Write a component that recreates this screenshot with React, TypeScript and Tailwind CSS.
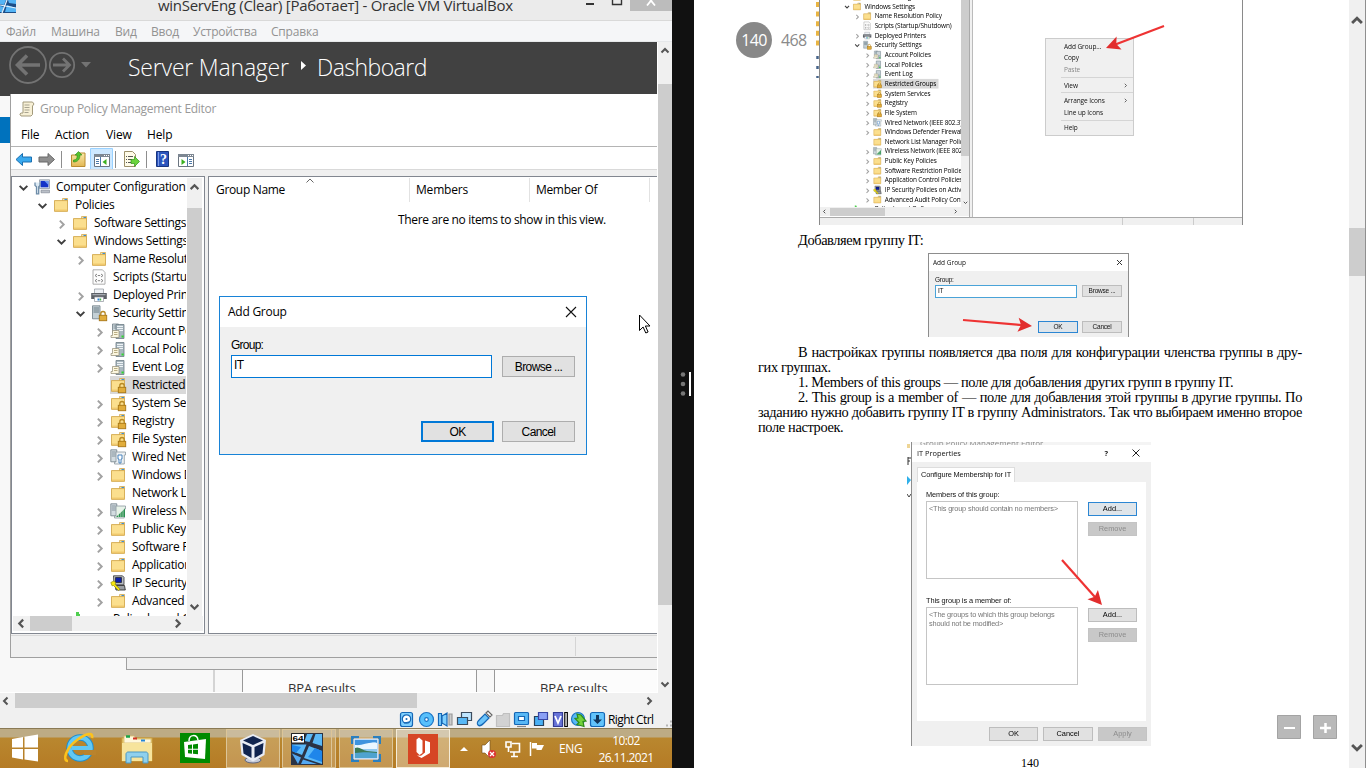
import type { ReactNode } from "react";

const UI = "font-['Open_Sans','Noto_Sans',sans-serif]";
const SANS = "font-['Liberation_Sans',sans-serif]";

/* ---------- small glyphs ---------- */

function Chev({ dir, className = "", color = "#555", w = 2 }: { dir: "up" | "down" | "left" | "right"; className?: string; color?: string; w?: number }) {
  const d = {
    up: "M1.5 6.5 5 3l3.5 3.5",
    down: "M1.5 3.5 5 7l3.5-3.5",
    left: "M6.5 1.5 3 5l3.5 3.5",
    right: "M3.5 1.5 7 5 3.5 8.5",
  }[dir];
  return (
    <svg viewBox="0 0 10 10" className={"shrink-0 " + className}>
      <path d={d} fill="none" stroke={color} strokeWidth={w} />
    </svg>
  );
}

function Arrow({ x1, y1, x2, y2, className }: { x1: number; y1: number; x2: number; y2: number; className: string }) {
  const len = Math.hypot(x2 - x1, y2 - y1);
  const ux = (x2 - x1) / len;
  const uy = (y2 - y1) / len;
  const bx = x2 - ux * 14;
  const by = y2 - uy * 14;
  const pts = [
    [x2, y2],
    [bx - uy * 7, by + ux * 7],
    [bx + ux * 3, by + uy * 3],
    [bx + uy * 7, by - ux * 7],
  ];
  return (
    <svg className={"absolute overflow-visible " + className} width="80" height="60">
      <path d={`M${x1} ${y1}L${bx + ux * 4} ${by + uy * 4}`} stroke="#e33" strokeWidth="2.2" />
      <polygon points={pts.map((p) => p.join(",")).join(" ")} fill="#e22d2d" />
    </svg>
  );
}

/* ---------- tree icons ---------- */

const folderShape = (
  <>
    <path d="M1.5 3.5h8l1-2h4v13h-13z" fill="#e3b95c" />
    <path d="M9.500 1.500h5v2.500h-5z" fill="#f6e3a8" stroke="#c99a3c" strokeWidth=".6" />
    <path d="M11.500 2.500h2.500" stroke="#3b8fd8" strokeWidth="1" />
    <path d="M1.500 3.600h13v10.700h-13z" fill="#fbdf8e" stroke="#cfa44a" strokeWidth=".8" />
    <path d="M2 13.2h12.2" stroke="#efc568" strokeWidth="1.2" />
  </>
);
const lockShape = (
  <>
    <path d="M9.8 10.5V8.7a2.2 2.2 0 0 1 4.4 0v1.8" fill="none" stroke="#b98a25" strokeWidth="1.3" />
    <rect x="8.2" y="10.2" width="7.6" height="5.6" fill="#d79b22" stroke="#9c6d12" strokeWidth=".7" />
    <path d="M9 12h6M9 14h6" stroke="#f3cf6c" strokeWidth=".7" />
  </>
);
const serverShape = (
  <>
    <path d="M6 1.5h8v14H6z" fill="#a9b7bf" stroke="#6d7c85" strokeWidth=".8" />
    <path d="M7 3.5h6M7 5.5h6M7 7.5h6" stroke="#eef3f6" />
    <path d="M11.5 13.5h2.2" stroke="#31d631" strokeWidth="2" />
    <path d="M2.5 7.5h6.5v7H1v-2h1.5z" fill="#fbf6df" stroke="#8f8a74" strokeWidth=".7" />
    <path d="M4 9.5h3.5M4 11.5h3.5" stroke="#a89b6b" strokeWidth=".8" />
  </>
);

type IconName = "pc" | "folder" | "script" | "printer" | "secserver" | "acct" | "server" | "lock" | "wired" | "wifi" | "ip" | "green";

function TreeIcon({ name }: { name: IconName }) {
  let body: ReactNode = folderShape;
  if (name === "lock") body = <>{folderShape}{lockShape}</>;
  if (name === "server") body = serverShape;
  if (name === "acct")
    body = (
      <>
        <path d="M2.5 1h6v9h-6z" fill="#cfd9de" stroke="#6d7c85" strokeWidth=".8" />
        <path d="M3.5 3h4M3.5 5h4" stroke="#71818a" strokeWidth=".8" />
        {serverShape}
      </>
    );
  if (name === "secserver")
    body = (
      <>
        <path d="M1.5.8h7.5v13H1.5z" fill="#c4d0d6" stroke="#6d7c85" strokeWidth=".8" />
        <path d="M2.5 3h5.5M2.5 5h5.5M2.5 7h5.5" stroke="#5f717b" strokeWidth=".9" />
        {lockShape}
      </>
    );
  if (name === "pc")
    body = (
      <>
        <path d="M5.500.800h10v8.800h-10z" fill="#dfe6ee" stroke="#8a93a0" strokeWidth=".8" />
        <path d="M6.600 1.900h7.800v6.400H6.600z" fill="#1533c8" />
        <path d="M10.500 1.900h3.900v4z" fill="#6f9cf2" />
        <path d="M7 11.200h8.500v2.600H7z" fill="#b9bfc7" stroke="#7b838d" strokeWidth=".6" />
        <path d="M1 3.500v3l1.500 1.300v7h2.200v-7L6 6.500v-3" fill="#dce9f3" stroke="#6d8ca8" strokeWidth="1.300" />
      </>
    );
  if (name === "script")
    body = (
      <>
        <path d="M2 .8h9.500L14 3.500v11.700H2z" fill="#fdfdfd" stroke="#9a9a9a" strokeWidth=".8" />
        <path d="M6 5 4 6.500 6 8M10 5l2 1.500L10 8M6.800 6.500h2.400M6 10.200 4 11.700l2 1.500M10 10.200l2 1.500-2 1.500M6.800 11.700h2.400" fill="none" stroke="#777" strokeWidth=".9" />
      </>
    );
  if (name === "printer")
    body = (
      <>
        <path d="M3.500 2h9v5h-9z" fill="#eef1f5" stroke="#8d949c" strokeWidth=".7" />
        <path d="M.2 6h15.600v6H.2z" fill="#5c6066" />
        <path d="M1.500 7h13v1.300h-13z" fill="#a4a9b0" />
        <path d="M3.500 10h9v4.500h-9z" fill="#fff" stroke="#8d949c" strokeWidth=".7" />
        <path d="M6.500 11.500h2v2h-2z" fill="#2d7fd6" />
        <path d="M8.700 11.500h1.500v2H8.700z" fill="#48b04a" />
      </>
    );
  if (name === "wired" || name === "wifi")
    body = (
      <>
        <path d="M.8.800h6v12h-6z" fill="#d3dce1" stroke="#6d7c85" strokeWidth=".8" />
        <path d="M1.800 3h4M1.800 5h4M1.800 7h4" stroke="#71818a" strokeWidth=".8" />
        <path d="M6 3h9.500v3h-1.200v9H4.500v-2H6z" fill={name === "wired" ? "#edf1f3" : "#e7f2e8"} stroke="#8b979e" strokeWidth=".8" />
        {name === "wired" ? (
          <path d="M8 6h4v4h-1v4H9v-4H8z" fill="#fff" stroke="#3878b8" strokeWidth=".9" />
        ) : (
          <path d="M6 14h9V5.500z" fill="#2c8f50" />
        )}
        {name === "wifi" && <path d="M8.500 8v6M10.800 7v7M13 5v9" stroke="#dff2e3" strokeWidth=".6" />}
      </>
    );
  if (name === "ip")
    body = (
      <>
        <path d="M3.500.800h9l1.500 1.500v7.500h-10z" fill="#b9bdc2" stroke="#333" strokeWidth=".8" />
        <path d="M5.500 2.500h6v5h-6z" fill="#0b1ea8" stroke="#111" strokeWidth=".6" />
        <path d="M5 10.500h9.500l.8 4.500H6z" fill="#9a9ea3" stroke="#222" strokeWidth=".8" />
        <path d="M.8 7.500l3-1.500 2 2-.8 1.200 5 5-1.500 1.300-5-5-1.500.300z" fill="#f6e710" stroke="#8a7d00" strokeWidth=".6" />
      </>
    );
  if (name === "green") body = <path d="M-15 1h3v2h1v12h-4z" fill="#4fcf4f" />;
  return (
    <svg viewBox="0 0 16 16" className="h-4 w-4 shrink-0 overflow-visible">
      {body}
    </svg>
  );
}

type Row = { t: string; l: 0 | 1 | 2 | 3 | 4; i: IconName; c?: "open" | "closed"; sel?: boolean };
const PAD = { 0: "pl-[5px]", 1: "pl-[24px]", 2: "pl-[43px]", 3: "pl-[62px]", 4: "pl-[81px]" };

function TreeRow({ row, wide }: { row: Row; wide?: boolean }) {
  return (
    <div className={"flex h-[18px] shrink-0 items-center " + PAD[row.l]}>
      <span className="flex w-[16px] shrink-0">
        {row.c && <Chev dir={row.c === "open" ? "down" : "right"} className={row.c === "open" ? "h-[11px] w-[11px]" : "mt-0.5 h-[11px] w-[11px]"} color={row.c === "open" ? "#404040" : "#a2a2a2"} w={1.8} />}
      </span>
      <span className={"flex h-[18px] items-center gap-[6px] " + (row.sel ? "bg-[#d9d9d9] " + (wide ? "pr-1" : "pr-10") : "")}>
        <TreeIcon name={row.i} />
        <span className={"whitespace-nowrap leading-[18px] " + (wide ? "text-[12px] font-medium tracking-[-0.28px]" : "text-[12px] tracking-[-0.3px]")}>{row.t}</span>
      </span>
    </div>
  );
}

const rows: Row[] = [
  { t: "Computer Configuration", l: 0, i: "pc", c: "open" },
  { t: "Policies", l: 1, i: "folder", c: "open" },
  { t: "Software Settings", l: 2, i: "folder", c: "closed" },
  { t: "Windows Settings", l: 2, i: "folder", c: "open" },
  { t: "Name Resolution Policy", l: 3, i: "folder", c: "closed" },
  { t: "Scripts (Startup/Shutdown)", l: 3, i: "script" },
  { t: "Deployed Printers", l: 3, i: "printer", c: "closed" },
  { t: "Security Settings", l: 3, i: "secserver", c: "open" },
  { t: "Account Policies", l: 4, i: "acct", c: "closed" },
  { t: "Local Policies", l: 4, i: "server", c: "closed" },
  { t: "Event Log", l: 4, i: "server", c: "closed" },
  { t: "Restricted Groups", l: 4, i: "lock", sel: true },
  { t: "System Services", l: 4, i: "lock", c: "closed" },
  { t: "Registry", l: 4, i: "lock", c: "closed" },
  { t: "File System", l: 4, i: "lock", c: "closed" },
  { t: "Wired Network (IEEE 802.3)", l: 4, i: "wired", c: "closed" },
  { t: "Windows Defender Firewall", l: 4, i: "folder", c: "closed" },
  { t: "Network List Manager Policies", l: 4, i: "folder" },
  { t: "Wireless Network (IEEE 802.11)", l: 4, i: "wifi", c: "closed" },
  { t: "Public Key Policies", l: 4, i: "folder", c: "closed" },
  { t: "Software Restriction Policies", l: 4, i: "folder", c: "closed" },
  { t: "Application Control Policies", l: 4, i: "folder", c: "closed" },
  { t: "IP Security Policies on Active", l: 4, i: "ip", c: "closed" },
  { t: "Advanced Audit Policy Configuration", l: 4, i: "folder", c: "closed" },
  { t: "Policy-based QoS", l: 3, i: "green" },
];

/* ---------- left: virtual machine window ---------- */

function HostChrome() {
  return (
    <>
      <div className="relative flex h-[21px] shrink-0 border-b border-[#d9d9d9] bg-[#ebebeb]">
        <svg width="16" height="13" className="shrink-0">
          <path d="M0 0h16v13H0z" fill="#1d4d86" />
          <path d="M0 0h6L4 5 0 4zM8 0h8v4L9 3zM0 6l4 1-2 5H0zM7 5l9 3v4H5z" fill="#54b4f5" />
          <path d="M7 0 2 13M0 5l16 3" stroke="#e6f4ff" strokeWidth="1.2" />
        </svg>
        <div className="-mt-[5px] ml-[142px] whitespace-nowrap text-[15px] leading-[21px] tracking-[-0.29px] text-[#333]">winServEng (Clear) [Работает] - Oracle VM VirtualBox</div>
        <div className="ml-auto flex h-[11px]">
          <svg width="44" height="11">
            <path d="M0 4h8" stroke="#333" strokeWidth="2" />
            <path d="M26.500-3v7.500h9V-3" fill="none" stroke="#333" strokeWidth="1.4" />
          </svg>
          <div className="flex w-[42px] justify-center bg-[#bcbcbc]">
            <svg width="10" height="6"><path d="M1 5.500 8-3M9 5.500 2-3" stroke="#fff" strokeWidth="1.800" /></svg>
          </div>
        </div>
      </div>
      <div className="flex h-[21px] shrink-0 border-b border-[#e6e8ea] bg-[#f5f6f8] pl-[6px] text-[12px] leading-[22px] tracking-[-0.2px] text-[#929292]">
        <span className="w-[45px]">Файл</span>
        <span className="w-[64px]">Машина</span>
        <span className="w-[36px]">Вид</span>
        <span className="w-[42px]">Ввод</span>
        <span className="w-[78px]">Устройства</span>
        <span>Справка</span>
      </div>
    </>
  );
}

function ServerManager() {
  return (
    <div className="flex h-full flex-col bg-[#f8f8f8]">
      <div className="flex h-[54px] shrink-0 items-start bg-[#414141] pb-0.5">
        <svg width="128" height="52" fill="none" stroke="#737373">
          <circle cx="28" cy="23" r="18" strokeWidth="1.800" />
          <path d="M40 23H18M27 13.500 17.500 23l9.500 9.500" strokeWidth="3.600" />
          <circle cx="62" cy="23" r="12.200" strokeWidth="1.800" />
          <path d="M53 23h15M63 16.500l6.500 6.500-6.500 6.500" strokeWidth="2.800" />
          <path d="M81 20h10l-5 5.500z" fill="#737373" stroke="none" />
        </svg>
        <div className="flex h-[50px] items-center whitespace-nowrap text-[23px] font-light text-white">
          <span className="w-[171px] tracking-[-0.2px]">Server Manager</span>
          <svg width="18" height="12"><path d="M2 0v9l5-4.500z" fill="#fff" /></svg>
          <span className="tracking-[-0.55px]">Dashboard</span>
        </div>
      </div>
      <div className="mt-[21px] h-[26px] w-[11px] bg-[#0072bd]" />
      <div className="mt-auto flex h-[23px] items-stretch overflow-hidden">
        <div className="w-[215px] border-r-2 border-[#d4d4d4]" />
        <div className="ml-[27px] w-[235px] border-x border-[#999] bg-[#fcfcfc] pl-[45px] pt-[10px] text-[13px] leading-[19px] tracking-[-0.1px] text-[#333]">BPA results</div>
        <div className="ml-[17px] flex-1 border-l border-[#999] bg-[#fcfcfc] pl-[45px] pt-[10px] text-[13px] leading-[19px] tracking-[-0.1px] text-[#333]">BPA results</div>
      </div>
    </div>
  );
}

function Toolbar() {
  return (
    <svg width="200" height="22" className="block">
      <defs>
        <linearGradient id="fy" x1="0" y1="0" x2="0" y2="1"><stop offset="0" stopColor="#fbe9a9" /><stop offset="1" stopColor="#e2b753" /></linearGradient>
      </defs>
      <path d="M5 12.500l6.500-6v3.500h9v5h-9v3.500z" fill="#39a9ee" stroke="#1b6fb0" />
      <path d="M43.500 12.500l-6.500-6v3.500h-9v5h9v3.500z" fill="#8f8f8f" stroke="#686868" />
      <path d="M50.500 4v17M104.500 4v17M135.500 4v17" stroke="#8e8e8e" />
      <path d="M60.500 8h6l1.500-2h6v13.500h-13.500z" fill="url(#fy)" stroke="#b98c31" />
      <path d="M62.500 13c4 0 3.500-3 3.500-5h-2l3.500-3.500 3.500 3.500H69c0 4-2 7-6.500 7z" fill="#55c22f" stroke="#2b8a16" strokeWidth=".6" />
      <path d="M79.500 1.500h22v21h-22z" fill="#cde8ff" stroke="#99d1ff" />
      <g>
        <path d="M83.500 7.500h15v12h-15z" fill="#fff" stroke="#6b7580" />
        <path d="M83 7h16v3H83z" fill="#7d8792" /><path d="M93 8.500h5" stroke="#fff" strokeDasharray="1 1" />
        <path d="M89.500 10v9M85 12.500h3M85 14.500h3M85 16.500h3" stroke="#4c78a8" />
        <path d="M95.500 12v6L91.500 15z" fill="#3bb01f" />
      </g>
      <path d="M113.500 4.500h8l3 3v12h-11z" fill="#fffbe8" stroke="#9b8f69" />
      <path d="M115 9.500h1M117 9.500h5M115 12.500h1M117 12.500h4M115 15.500h1M117 15.500h4" stroke="#555" />
      <path d="M120 12.500h3.500v-3l5 5-5 5v-3H120z" fill="#6bd33d" stroke="#31941a" strokeWidth=".7" />
      <path d="M145.500 4.500h12v15h-12z" fill="#2c55bd" stroke="#18357f" /><path d="M147.500 5v14" stroke="#7c9be6" />
      <text x="149" y="17" fontSize="14" fontWeight="700" fill="#fff" fontFamily="Liberation Serif, serif">?</text>
      <path d="M167.500 7.500h15v12h-15z" fill="#fff" stroke="#6b7580" />
      <path d="M167 7h16v3h-16z" fill="#7d8792" /><path d="M177 8.500h5" stroke="#fff" strokeDasharray="1 1" />
      <path d="M176.500 10v9M178 12.500h3M178 14.500h3M178 16.500h3" stroke="#4c78a8" />
      <path d="M170.500 12v6l4-3z" fill="#3bb01f" />
    </svg>
  );
}

function TreePane() {
  return (
    <div className="flex w-[194px] shrink-0 flex-col border border-[#828790] bg-white p-px">
      <div className="flex h-[438px] pr-px">
        <div className="flex w-[173px] shrink-0 flex-col overflow-hidden">
          {rows.map((r, n) => (
            <TreeRow key={n} row={r} />
          ))}
        </div>
        <div className="ml-px flex flex-1 flex-col items-center bg-[#f0f0f0]">
          <Chev dir="up" className="mt-1 h-[11px] w-[11px]" />
          <div className="mt-[15px] h-[312px] w-full bg-[#cdcdcd]" />
          <Chev dir="down" className="mb-1 mt-auto h-[11px] w-[11px]" />
        </div>
      </div>
      <div className="flex h-[15px] items-center bg-[#f0f0f0] pl-[3px]">
        <Chev dir="left" className="h-[11px] w-[11px]" />
        <div className="ml-[3px] h-[15px] w-[42px] bg-[#cdcdcd]" />
        <Chev dir="right" className="ml-[100px] h-[11px] w-[11px]" />
      </div>
    </div>
  );
}

function ListPane() {
  return (
    <div className="flex flex-1 flex-col border-y border-l border-[#828790] bg-white text-[12px]">
      <div className="mt-px flex h-[24px] text-[12px] leading-[24px] tracking-[-0.33px]">
        <div className="relative w-[201px] border-r border-[#e2e2e2] pl-[7px]">
          Group Name
          <Chev dir="up" className="absolute left-[96px] top-[-2px] h-[10px] w-[10px]" color="#666" w={1} />
        </div>
        <div className="w-[120px] border-r border-[#e2e2e2] pl-[6px] tracking-[-0.2px]">Members</div>
        <div className="w-[120px] border-r border-[#e2e2e2] pl-[6px]">Member Of</div>
      </div>
      <div className="mt-[9px] pl-[189px] leading-[18px] tracking-[-0.33px]">There are no items to show in this view.</div>
    </div>
  );
}

function PolicyEditor() {
  return (
    <div className="absolute left-[10px] top-[52px] flex h-[564px] w-[647px] flex-col border-b border-l border-[#a0a0a0] bg-[#f0f0f0]">
      <div className="flex h-[27px] shrink-0 items-center gap-[5px] bg-white pl-[8px] pt-[3px]">
        <svg width="16" height="16">
          <path d="M4 1h9.500l1.500 2-1.500 2v8.500L12 15H2L.8 13 2 12h2z" fill="#f7f0d6" stroke="#a39a7c" />
          <path d="M5.500 4h5M5.500 6.500h5M5.500 9h5M5.500 11.500h4" stroke="#a8a391" />
        </svg>
        <span className="text-[12px] tracking-[-0.29px] text-[#999]">Group Policy Management Editor</span>
      </div>
      <div className="flex h-[26px] shrink-0 border-b border-[#b4b4b4] bg-white pl-[10px] text-[12px] leading-[28px] tracking-[-0.15px]">
        <span className="w-[34px]">File</span>
        <span className="w-[51px]">Action</span>
        <span className="w-[41px]">View</span>
        <span>Help</span>
      </div>
      <div className="h-[23px] shrink-0 border-b border-[#d9d9d9] bg-white"><Toolbar /></div>
      <div className="mt-[6px] flex h-[458px] shrink-0 gap-[3px]">
        <TreePane />
        <ListPane />
      </div>
      <div className="mt-px flex flex-1 border-t border-[#d9d9d9] py-px"><div className="w-[565px] border-r border-[#d5d5d5]" /></div>
    </div>
  );
}

function DialogButton({ children, primary }: { children: ReactNode; primary?: boolean }) {
  return (
    <div className={"flex h-[21px] w-[73px] items-center justify-center bg-[#e1e1e1] text-[12px] tracking-[-0.6px] " + (primary ? "border-2 border-[#0078d7]" : "border border-[#adadad]")}>{children}</div>
  );
}

function AddGroupDialog() {
  return (
    <div className="absolute left-[219px] top-[254px] h-[159px] w-[368px] border border-[#1883d7] bg-[#f0f0f0]">
      <div className="flex h-[30px] items-center justify-between bg-white pl-[8px] pr-[9px]">
        <span className="text-[12px] tracking-[-0.25px]">Add Group</span>
        <svg width="12" height="12"><path d="M1 1l10 10M11 1 1 11" stroke="#111" strokeWidth="1.100" /></svg>
      </div>
      <div className={"pl-[11px] pr-[11px] pt-[10px] " + SANS}>
        <div className="text-[12px] leading-[16px] tracking-[-0.75px]">Group:</div>
        <div className="mt-[2px] flex justify-between">
          <div className="h-[23px] w-[261px] border border-[#0078d7] bg-white pl-[2px] text-[12px] leading-[19px] tracking-[-0.5px]">IT</div>
          <div className="pt-px"><DialogButton>Browse ...</DialogButton></div>
        </div>
        <div className="mt-[43px] flex justify-end gap-[8px]">
          <DialogButton primary>OK</DialogButton>
          <DialogButton>Cancel</DialogButton>
        </div>
      </div>
    </div>
  );
}

function StatusIcons() {
  return (
    <svg width="672" height="20" className="block">
      <g strokeWidth="1.200">
        <rect x="400.500" y="4.500" width="12" height="14" rx="2" fill="#7fd0ff" stroke="#1567b5" />
        <circle cx="406.500" cy="11" r="4.200" fill="#fff" stroke="#1567b5" /><circle cx="406.500" cy="11" r="1" fill="#1567b5" /><path d="M404 15l5-1" stroke="#1567b5" />
        <circle cx="426.500" cy="11.500" r="7" fill="#58c0fb" stroke="#1b74c5" /><circle cx="426.500" cy="11.500" r="1.800" fill="#fff" stroke="#1b74c5" />
        <path d="M438.500 5.500h3v12h-3zM442 8l5-3v13l-5-3z" fill="#7fd0ff" stroke="#1567b5" /><path d="M449 6h3v11h-3z" fill="#ccc" stroke="#999" />
        <path d="M461.500 4.500h10v8h-10z" fill="#bfe6ff" stroke="#3b4c5e" /><path d="M457.500 9.500h10v7h-10z" fill="#58b8f5" stroke="#3b4c5e" />
        <path d="M478 17c-2-2 0-4 2-6l5-5 4 4-5 5c-2 2-4 4-6 2z" fill="#6cc4fa" stroke="#1567b5" /><path d="M486 5l2-2 4 4-2 2z" fill="#fff" stroke="#666" />
        <path d="M496.500 7.500h6l1-2h6v13h-13z" fill="#d2d2d2" stroke="#c0c0c0" />
        <rect x="514.500" y="4.500" width="14" height="12" rx="1" fill="#58b8f5" stroke="#1567b5" /><path d="M518.500 8.500h6v4h-6z" fill="#fff" stroke="#1567b5" /><path d="M517 18.500h9" stroke="#888" />
        <path d="M534.500 8.500h9v9h-9z" fill="#49b0f4" stroke="#26415c" /><path d="M538.500 4.500h9v7h-9z" fill="#8aa0f5" stroke="#3946a5" />
        <path d="M553.500 4.500h9v14h-9z" fill="#6874d8" stroke="#333c97" /><path d="M555 8l3 7 3-7" fill="none" stroke="#fff" strokeWidth="1.800" />
        <path d="M564.800 4.500h2.500v14h-2.500z" fill="#fff" stroke="#000" />
        <circle cx="578" cy="11" r="6.500" fill="#58b8f5" stroke="#1b74c5" /><path d="M577 6l4 1 5 6-3 .500 1 5-7-2 2-2-4-4 3-.500z" fill="#72d13b" stroke="#2c8a1a" />
        <rect x="590.500" y="4.500" width="14" height="14" rx="2" fill="#62c3fb" stroke="#1567b5" />
        <path d="M597.500 7v5" stroke="#12365c" strokeWidth="3" /><path d="M593 11.500h9l-4.500 4.500z" fill="#12365c" />
      </g>
      <path d="M670 13.500h2M666 17.500h2M670 17.500h2" stroke="#b5b5b5" strokeWidth="2" />
      <text x="608" y="16" fontSize="12" letterSpacing="-0.6" fill="#000" fontFamily="Open Sans, sans-serif">Right Ctrl</text>
    </svg>
  );
}

function TaskButton({ children, active, className }: { children: ReactNode; active?: boolean; className: string }) {
  return (
    <div className={"flex h-[39px] items-center justify-center border " + className + (active ? " border-[#f5ecd9] bg-white/35" : " border-[#dcc598] bg-white/20")}>{children}</div>
  );
}

function Taskbar() {
  return (
    <div className="relative flex h-[40px] shrink-0 bg-[linear-gradient(180deg,#bdab84_0,#bdab84_9px,#b9872f_10px,#b57b25_100%)] pt-px shadow-[inset_0_1px_0_#8a7a55]">
      <svg width="226" height="39" className="shrink-0">
        <path d="M12 10l11-2v10.500H12zM24.500 7.700 38 5.500v13H24.500zM12 20h11v10.500l-11-2zM24.500 20H38v12.500l-13.500-2z" fill="#fff" />
        <g transform="translate(0 -1)">
          <circle cx="80" cy="20" r="10.500" fill="none" stroke="#1f8fd0" strokeWidth="6.500" />
          <circle cx="80" cy="20" r="10.500" fill="none" stroke="#62c8f4" strokeWidth="4.500" />
          <path d="M72 20h20" stroke="#62c8f4" strokeWidth="4" /><path d="M84 24.500h12" stroke="#b9832d" strokeWidth="5" />
          <path d="M68 33c-6 0-2-13 9-21 9-7 17-8 15-2" fill="none" stroke="#fcc21c" strokeWidth="2.600" />
        </g>
        <path d="M122 9h30v23h-30z" fill="#eed37c" stroke="#c9a142" /><path d="M124 7h10l2 3h15v4h-27z" fill="#fff8dc" stroke="#d8bd6e" strokeWidth=".8" />
        <path d="M126 7.500h4" stroke="#18a348" strokeWidth="2.500" /><path d="M133 9.500h4" stroke="#cf3327" strokeWidth="2" /><path d="M141 11.500h4" stroke="#2586d7" strokeWidth="2" />
        <path d="M122 14h30v18h-30z" fill="#f7e49c" />
        <path d="M126 34V25c0-1 1-2 2-2h18c1 0 2 1 2 2v9h-5v-6h-12v6z" fill="#8fd0ee" stroke="#4b98c3" />
        <path d="M180 4h30v30h-30z" fill="#008a00" />
        <path d="M184 13l22-3-1 20-20-2z" fill="#fff" /><path d="M189 12c0-7 8-7 9-1" fill="none" stroke="#fff" strokeWidth="1.500" />
        <path d="M188 16l4-.5v4.300h-4zM193 15.400l5-.6v5h-5zM188 20.800h4v3.900l-4-.5zM193 20.800h5v4.500l-5-.6z" fill="#008a00" />
      </svg>
      <TaskButton className="w-[54px]">
        <svg width="30" height="32">
          <ellipse cx="15" cy="27" rx="8" ry="3" fill="#c6cbd8" stroke="#5e6680" />
          <path d="M15 1 28 7l-1.500 15L15 28.500 3.500 22 2 7z" fill="#e8ecf5" />
          <path d="M15 3l10 4.500L15 12 5 7.500zM4.500 10 13.500 14v11L5.500 20.500zM25.500 10l-9 4v11l8-4.500z" fill="#10244f" />
        </svg>
      </TaskButton>
      <TaskButton className="ml-[2px] w-[50px] !justify-start pl-[8px]">
        <svg width="32" height="32">
          <path d="M0 0h32v32H0z" fill="#2b3344" />
          <path d="M16 1h6l-3.500 8-5-1zM24.500 1H31v12l-9.500-3zM1 11.500h14.500L11 22 1 18zM18 13l13 5v13l-18-6z" fill="#5bb9f7" /><path d="M1 12l9 2-5 6-4-2zM24 15l7 3v11l-14-5z" fill="#1f86ea" /><path d="M1 20.500l9 4-3 6.500zM12 26.500l14 4.500H10z" fill="#54a9f2" />
          <path d="M.5.500h13v9.500H.5z" fill="#fff" stroke="#222" />
          <text x="1.500" y="8.200" fontSize="8" fontWeight="700" textLength="11" lengthAdjust="spacingAndGlyphs" fontFamily="Liberation Sans, sans-serif">64</text>
        </svg>
      </TaskButton>
      <div className="mr-[3px] w-[4px] border border-l-0 border-[#dcc598] bg-white/20" />
      <TaskButton className="w-[54px]">
        <svg width="30" height="26">
          <path d="M1 8V1h7M22 1h7v7M29 18v7h-7M8 25H1v-7" fill="none" stroke="#2a7fc0" strokeWidth="3" />
          <path d="M3 3h24v20H3z" fill="#8fc8ef" stroke="#eef" /><path d="M4 4h22v3c-6-2-12 4-22 2z" fill="#3f93de" /><path d="M4 9c8 1 14-4 22-2v6H4z" fill="#eaf6ff" />
          <path d="M4 12c4-2 7 2 12 3l10 1v2H4z" fill="#3b7a56" /><path d="M4 17c8-1 14-1 22 0v5H4z" fill="#4fa3cf" />
        </svg>
      </TaskButton>
      <TaskButton active className="ml-[3px] w-[54px]">
        <svg width="30" height="30">
          <path d="M0 0h30v30H0z" fill="#d64524" />
          <path d="M8.500 5.500 11 3.500l3.500 3v12.500l-3 2-3-3z" fill="#fff" />
          <path d="M17 6.500l5 1.800V19l-8.500 5L9 21.500l4 .200 4-3.200z" fill="#fff" />
        </svg>
      </TaskButton>
      <svg width="108" height="39" className="shrink-0">
        <path d="M10 22h8l-4-4z" fill="#fff" />
        <path d="M32 16h3l5-5v18l-5-5h-3z" fill="#fff" stroke="#6b4c1b" strokeWidth=".6" /><circle cx="42" cy="25" r="4" fill="#d33" /><path d="M40 23l4 4M44 23l-4 4" stroke="#fff" strokeWidth="1.300" />
        <path d="M62 14.500h7.500v8.500H60M64 23v4M61 27.500h7M56 13h5v5h-5zM58.500 18v5" fill="none" stroke="#fff" strokeWidth="1.600" />
        <path d="M80.500 13v14" stroke="#fff" strokeWidth="1.500" /><path d="M82 14h5v2h7l-2.500 5h-5v-1.500H82z" fill="#fff" />
      </svg>
      <div className="flex h-[39px] items-center pl-px text-[12px] text-white"><span className="w-[33px] tracking-[-0.3px]">ENG</span></div>
      <div className="w-[68px] pt-[4px] text-center text-[12px] leading-[16.500px] tracking-[-0.6px] text-white">
        10:02<br />26.11.2021
      </div>
    </div>
  );
}

function LeftHalf() {
  return (
    <div className="flex w-[672px] shrink-0 flex-col bg-[#f0f0f0]">
      <HostChrome />
      <div className="flex h-[651px] shrink-0 bg-white">
        <div className="relative h-[650px] w-[657px] overflow-hidden bg-white">
          <ServerManager />
          <div className="absolute left-[126px] top-[600px] h-[28px] w-[531px] border-b border-l border-[#a0a0a0] bg-[#f0f0f0]" />
          <PolicyEditor />
          <AddGroupDialog />
          <svg className="absolute left-[638px] top-[272px]" width="13" height="20">
            <path d="M1.500 1v15.500l3.600-3.500 2.700 6 2.300-1-2.700-6h4.600z" fill="#fff" stroke="#000" />
          </svg>
        </div>
        <div className="ml-px flex w-[14px] flex-col items-center bg-[#f0f0f0]">
          <Chev dir="up" className="mt-[4px] h-[10px] w-[10px]" />
          <div className="mt-[28px] h-[521px] w-full bg-[#cdcdcd]" />
          <Chev dir="down" className="mb-[4px] mt-auto h-[10px] w-[10px]" />
        </div>
      </div>
      <div className="flex h-[15px] shrink-0 items-center">
        <Chev dir="left" className="ml-px h-[10px] w-[10px]" />
        <div className="ml-[4px] h-[15px] w-[402px] bg-[#cdcdcd]" />
        <Chev dir="right" className="ml-auto mr-[18px] h-[10px] w-[10px]" />
      </div>
      <div className="h-[20px] shrink-0"><StatusIcons /></div>
      <Taskbar />
    </div>
  );
}

/* ---------- right: document reader ---------- */

function MenuItem({ children, sub, dim }: { children: ReactNode; sub?: boolean; dim?: boolean }) {
  return (
    <div className={"flex h-[11.800px] items-center justify-between pl-[18px] pr-[5px] " + (dim ? "text-[#888]" : "")}>
      {children}
      {sub && <Chev dir="right" className="h-[5px] w-[5px]" color="#444" w={1.600} />}
    </div>
  );
}

function PolicyFigure() {
  return (
    <div className="relative ml-[125px] flex h-[225px] w-[424px] flex-col border-l border-r border-[#8a8a8a] bg-[#f0f0f0] blur-[0.4px]">
      <svg className="absolute -left-[4px] top-0" width="3" height="82">
        <path d="M1.500 2v46" stroke="#e9b544" strokeWidth="3" strokeDasharray="5 4.600" /><path d="M1.500 56v22" stroke="#47648a" strokeWidth="2.500" strokeDasharray="3 7" />
      </svg>
      <div className="flex h-[218px] border-b border-[#aaa]">
        <div className="flex w-[150px] flex-col border-r border-[#aaa] bg-white">
          <div className="flex h-[207px]">
            <div className="w-[141px] shrink-0 overflow-hidden">
              <div className="-mt-[8px] ml-px w-[262px] origin-top-left scale-[0.5365]">
                {rows.slice(2).map((r, n) => (
                  <TreeRow key={n} row={r.sel ? { ...r, c: "closed" } : r} wide />
                ))}
              </div>
            </div>
            <div className="flex w-[8px] flex-col items-center bg-[#f0f0f0]">
              <div className="h-[156px] w-full bg-[#cdcdcd]" />
              <Chev dir="down" className="mb-[2px] mt-auto h-[5px] w-[5px]" />
            </div>
          </div>
          <div className="flex h-[9px] items-center bg-[#f0f0f0] pl-[2px]">
            <Chev dir="left" className="h-[5px] w-[5px]" />
            <div className="ml-[3px] h-[8px] w-[55px] bg-[#cdcdcd]" />
            <Chev dir="right" className="ml-[68px] h-[5px] w-[5px]" />
          </div>
        </div>
        <div className="ml-[2px] flex-1 border-l border-[#bbb] bg-white" />
      </div>
      <div className="flex flex-1"><div className="w-[303px] border-r border-[#ccc]" /><div className="w-[71px] border-r border-[#ccc]" /></div>
      <div className="absolute left-[225px] top-[38px] h-[98px] w-[89px] border border-[#ccc] bg-[#f0f0f0] pt-[1.500px] text-[6.500px] font-medium tracking-[-0.080px] text-[#111]">
        <MenuItem>Add Group...</MenuItem>
        <MenuItem>Copy</MenuItem>
        <MenuItem dim>Paste</MenuItem>
        <div className="ml-[15px] mt-px border-t border-[#d5d5d5] pb-[1.700px]" />
        <MenuItem sub>View</MenuItem>
        <div className="ml-[15px] mt-px border-t border-[#d5d5d5] pb-[1.700px]" />
        <MenuItem sub>Arrange Icons</MenuItem>
        <MenuItem>Line up Icons</MenuItem>
        <div className="ml-[15px] mt-px border-t border-[#d5d5d5] pb-[1.700px]" />
        <MenuItem>Help</MenuItem>
      </div>
      <Arrow className="left-[280px] top-0" x1={64} y1={26} x2={6} y2={48} />
    </div>
  );
}

function SmallButton({ children, primary, dim, className }: { children: ReactNode; primary?: boolean; dim?: boolean; className: string }) {
  return (
    <div
      className={
        "flex shrink-0 items-center justify-center border " + className + " " + (primary ? "border-[1.500px] border-[#2b86d3] bg-[#dfe5ea]" : dim ? "border-[#c4c4c4] bg-[#c8c8c8] text-[#8c8c8c]" : "border-[#bdbdbd] bg-[#e1e1e1]")
      }
    >
      {children}
    </div>
  );
}

function AddGroupFigure() {
  return (
    <div className={"relative ml-[234px] mt-[4px] h-[84px] w-[201px] border border-b-0 border-[#8d8d8d] bg-[#f0f0f0] text-[#111] blur-[0.4px] " + SANS}>
      <div className={"flex h-[17px] items-center justify-between bg-white pl-[4px] pr-[5px] text-[6.500px] font-medium " + UI}>
        Add Group
        <svg width="7" height="7"><path d="M1 1l5 5M6 1 1 6" stroke="#333" /></svg>
      </div>
      <div className="pl-[6px] pr-[6px] pt-[4px] text-[6.500px] tracking-[-0.2px]">
        <div className="leading-[9px]">Group:</div>
        <div className="mt-[1px] flex justify-between">
          <div className="h-[13px] w-[142px] border border-[#4aa3d8] bg-white pl-[2px] leading-[10px]">IT</div>
          <SmallButton className="h-[12px] w-[40px]">Browse ...</SmallButton>
        </div>
        <div className="mt-[23px] flex justify-end gap-[4px]">
          <SmallButton primary className="h-[12px] w-[40px]">OK</SmallButton>
          <SmallButton className="h-[12px] w-[40px]">Cancel</SmallButton>
        </div>
      </div>
      <Arrow className="left-[30px] top-[60px]" x1={4} y1={6} x2={73} y2={12} />
    </div>
  );
}

function Membership({ label, text, primary, className }: { label: string; text: ReactNode; primary?: boolean; className: string }) {
  return (
    <div className={className}>
      <div className="h-[11px] leading-[10px] tracking-[-0.1px] text-[#111]">{label}</div>
      <div className="flex gap-[10px]">
        <div className="h-[78px] w-[152px] border border-[#c5c5c5] bg-white pl-[2px] pt-[2px] leading-[9px] tracking-[-0.2px] text-[#777]">{text}</div>
        <div className="flex flex-col gap-[6px] pt-[1px]">
          <SmallButton primary={primary} className="h-[14px] w-[49px]">Add...</SmallButton>
          <SmallButton dim className="h-[14px] w-[49px]">Remove</SmallButton>
        </div>
      </div>
    </div>
  );
}

function PropertiesFigure() {
  return (
    <div className={"relative ml-[217px] mt-[6.400px] flex h-[304px] w-[240px] flex-col border-l border-[#8d8d8d] bg-[#f0f0f0] text-[7.400px] blur-[0.4px] " + SANS}>
      <svg className="absolute -left-[5px] top-[2px]" width="4" height="60">
        <path d="M0 0h3v4H0z" fill="#eed595" /><path d="M1 14h3M1 17h2M1 13v8" stroke="#333" /><path d="M0 32l4 4-4 5z" fill="#2fb0ea" /><path d="M0 50l2 3 2-3" fill="none" stroke="#444" />
      </svg>
      <div className={"h-[3px] overflow-hidden bg-[#f4f4f4] pl-[8px] text-[8px] leading-[1px] text-[#888] " + UI}>Group Policy Management Editor</div>
      <div className={"flex h-[17px] items-center bg-white pl-[5px] pr-[11px] text-[7.400px] font-medium text-[#111] " + UI}>
        IT Properties
        <span className="ml-auto mr-[24px] font-bold">?</span>
        <svg width="8" height="8"><path d="M.5.500l7 7M7.500.500l-7 7" stroke="#222" /></svg>
      </div>
      <div className="ml-[5px] mt-[5px] h-[15px] w-[98px] border border-b-0 border-[#ddd] bg-white pl-[3px] leading-[14px] tracking-[-0.15px] text-[#111]">Configure Membership for IT</div>
      <div className="mx-[5px] h-[239px] bg-white pl-[9px] pt-[8px]">
        <Membership primary className="" label="Members of this group:" text="<This group should contain no members>" />
        <Membership className="mt-[17px]" label="This group is a member of:" text={<>&lt;The groups to which this group belongs<br />should not be modified&gt;</>} />
      </div>
      <div className="mt-[6px] flex justify-end gap-[5px] pr-[4px]">
        <SmallButton className="h-[14px] w-[49px]">OK</SmallButton>
        <SmallButton className="h-[14px] w-[50px]">Cancel</SmallButton>
        <SmallButton dim className="h-[14px] w-[49px]">Apply</SmallButton>
      </div>
      <Arrow className="left-[140px] top-[110px]" x1={10} y1={8} x2={50} y2={53} />
    </div>
  );
}

function Reader() {
  return (
    <div className="relative flex min-w-0 flex-1 bg-white">
      <div className={"flex w-[655px] shrink-0 flex-col *:shrink-0 " + UI}>
        <PolicyFigure />
        <div className="ml-[64px] w-[544px] whitespace-nowrap font-['Liberation_Serif',serif] text-[14.400px] leading-[15px] text-black">
          <div className="mt-[8px] h-[16px] pl-[40px] tracking-[-0.4px]">Добавляем группу IT:</div>
        </div>
        <AddGroupFigure />
        <div className="ml-[64px] mt-[8px] w-[544px] whitespace-nowrap font-['Liberation_Serif',serif] text-[14.400px] leading-[15.100px] tracking-[-0.36px] text-black">
          <div className="pl-[40px] [text-align-last:justify]">В настройках группы появляется два поля для конфигурации членства группы в дру-</div>
          <div>гих группах.</div>
          <div className="pl-[40px]">1. Members of this groups — поле для добавления других групп в группу IT.</div>
          <div className="pl-[40px] [text-align-last:justify]">2. This group is a member of — поле для добавления этой группы в другие группы. По</div>
          <div className="[text-align-last:justify]">заданию нужно добавить группу IT в группу Administrators. Так что выбираем именно второе</div>
          <div>поле настроек.</div>
        </div>
        <PropertiesFigure />
        <div className="ml-[64px] mt-[9px] w-[544px] text-center font-['Liberation_Serif',serif] text-[12px] leading-[16px]">140</div>
      </div>
      <div className="flex w-[17px] shrink-0 flex-col items-center border-r border-[#8f8f8f] bg-[#f0f0f0]">
        <Chev dir="up" className="mt-[14px] h-[14px] w-[14px]" />
        <div className="mt-[200px] h-[48px] w-full bg-[#cdcdcd]" />
        <Chev dir="down" className="mb-[14px] mt-auto h-[14px] w-[14px]" />
      </div>
      <div className="absolute left-[42px] top-[22px] flex items-center gap-[9px] text-[16px] tracking-[-0.600px] text-[#8a8a8a]">
        <span className="flex h-[36px] w-[36px] items-center justify-center rounded-full bg-[#888] text-white">140</span>
        <span>468</span>
      </div>
      <div className="absolute left-[583px] top-[715px] flex gap-[12px]">
        <svg width="24" height="24"><path d="M.5.500h23v23H.5z" fill="#b9b9b9" stroke="#a3a3a3" /><path d="M7 13h11" stroke="#fff" strokeWidth="2" /></svg>
        <svg width="24" height="24"><path d="M.5.500h23v23H.5z" fill="#b9b9b9" stroke="#a3a3a3" /><path d="M7 13h11M12.500 8v10" stroke="#fff" strokeWidth="2.500" /></svg>
      </div>
    </div>
  );
}

export default function App() {
  return (
    <div className={"flex h-[768px] w-[1366px] overflow-hidden bg-white text-black " + UI}>
      <LeftHalf />
      <div className="flex w-[22px] shrink-0 items-center justify-center bg-[#111]">
        <svg width="22" height="26">
          <circle cx="11" cy="3.500" r="2.300" fill="#777" /><circle cx="11" cy="13" r="2.300" fill="#777" /><circle cx="11" cy="22.500" r="2.300" fill="#777" />
          <path d="M18 1v24" stroke="#fff" strokeWidth="2" />
        </svg>
      </div>
      <Reader />
    </div>
  );
}
